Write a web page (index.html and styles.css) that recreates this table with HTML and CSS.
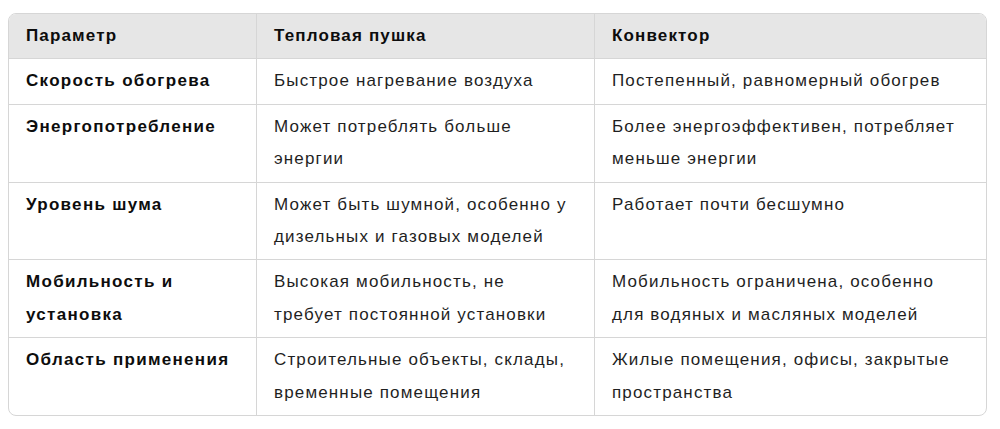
FILE: index.html
```html
<!DOCTYPE html>
<html lang="ru">
<head>
<meta charset="utf-8">
<title>Сравнение</title>
<link rel="stylesheet" href="styles.css">
</head>
<body>
<div class="table-wrap">
  <table class="cmp">
    <colgroup>
      <col class="c1">
      <col class="c2">
      <col class="c3">
    </colgroup>
    <thead>
      <tr>
        <th>Параметр</th>
        <th>Тепловая пушка</th>
        <th>Конвектор</th>
      </tr>
    </thead>
    <tbody>
      <tr>
        <td class="key">Скорость обогрева</td>
        <td>Быстрое нагревание воздуха</td>
        <td>Постепенный, равномерный обогрев</td>
      </tr>
      <tr>
        <td class="key">Энергопотребление</td>
        <td>Может потреблять больше энергии</td>
        <td>Более энергоэффективен, потребляет меньше энергии</td>
      </tr>
      <tr>
        <td class="key">Уровень шума</td>
        <td>Может быть шумной, особенно у дизельных и газовых моделей</td>
        <td>Работает почти бесшумно</td>
      </tr>
      <tr>
        <td class="key">Мобильность и установка</td>
        <td>Высокая мобильность, не требует постоянной установки</td>
        <td>Мобильность ограничена, особенно для водяных и масляных моделей</td>
      </tr>
      <tr>
        <td class="key">Область применения</td>
        <td>Строительные объекты, склады, временные помещения</td>
        <td>Жилые помещения, офисы, закрытые пространства</td>
      </tr>
    </tbody>
  </table>
</div>
</body>
</html>
```
FILE: styles.css
```css
html, body {
  margin: 0;
  padding: 0;
  background: #ffffff;
}
body {
  padding: 13px 13px 0 8px;
  font-family: "Liberation Sans", Arial, sans-serif;
  font-size: 17px;
  letter-spacing: 1.15px;
  color: #1f1f1f;
}
.table-wrap {
  width: 977px;
  border: 1px solid #d6d6d6;
  border-radius: 8px;
  overflow: hidden;
}
.cmp {
  width: 977px;
  border-collapse: separate;
  border-spacing: 0;
  table-layout: fixed;
}
.c1 { width: 248px; }
.c2 { width: 338px; }
.c3 { width: 391px; }
.cmp th,
.cmp td {
  text-align: left;
  vertical-align: top;
  padding: 6px 17px;
  line-height: 32.4px;
  border-right: 1px solid #d6d6d6;
  border-bottom: 1px solid #d6d6d6;
}
.cmp th:last-child,
.cmp td:last-child {
  border-right: none;
}
.cmp tbody tr:last-child td {
  border-bottom: none;
}
.cmp thead th {
  background: #e6e6e6;
  font-weight: bold;
  color: #0d0d0d;
}
.cmp td.key {
  font-weight: bold;
  letter-spacing: 1.3px;
  color: #0d0d0d;
}
```
